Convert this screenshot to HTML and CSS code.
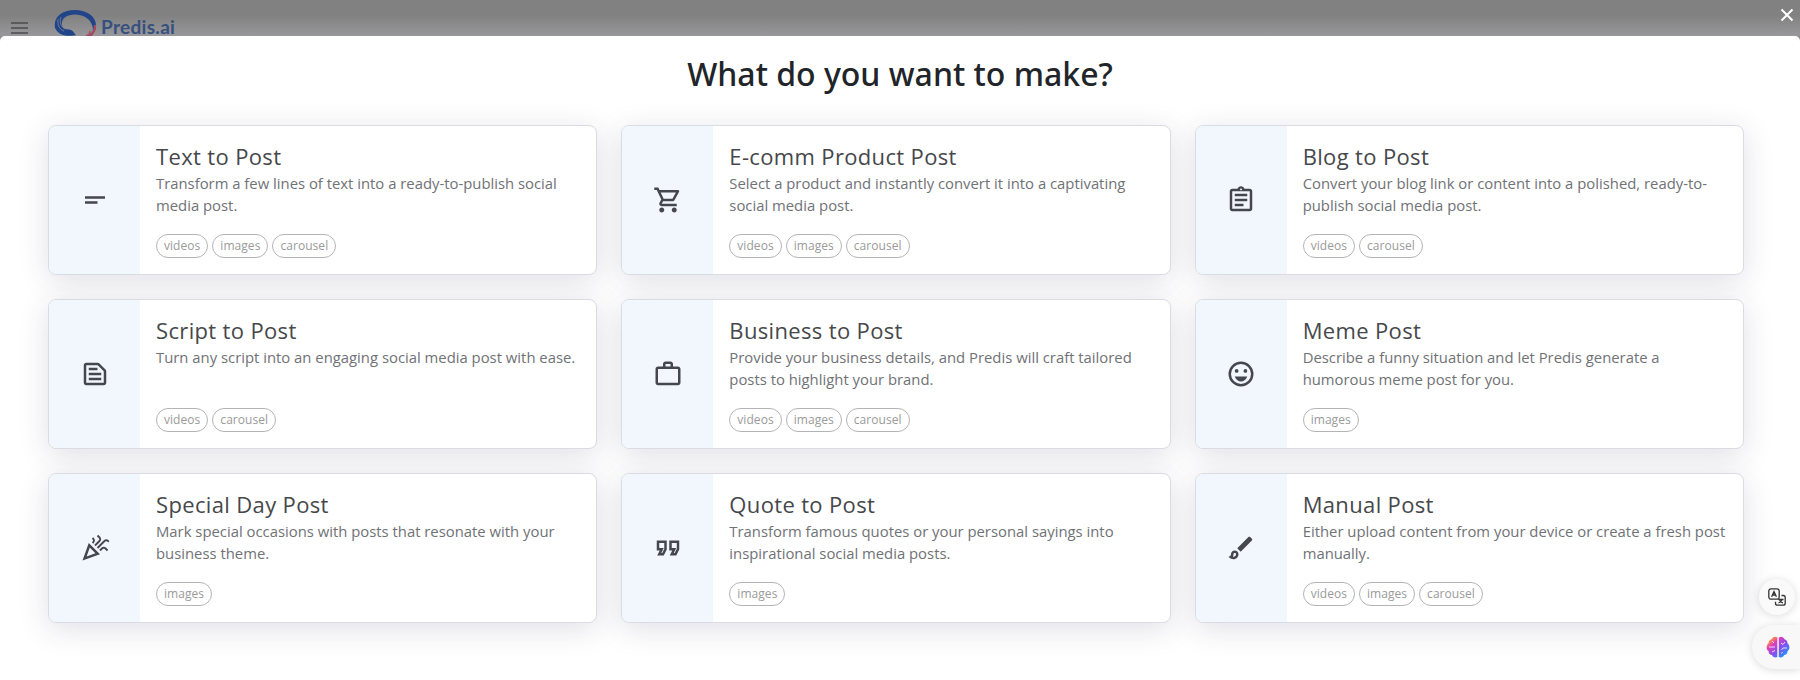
FILE: index.html
```html
<!DOCTYPE html>
<html lang="en">
<head>
    <meta charset="UTF-8">
    <meta name="viewport" content="width=device-width, initial-scale=1.0">
    <title>Predis.ai</title>
    <link rel="stylesheet" href="styles.css">
</head>
<body>
    <header class="topbar">
        <svg class="menu-icon" width="18" height="14" viewBox="0 0 18 14"><path d="M0 2h17M0 7h17M0 12h17"/></svg>
        <svg class="logo-mark" width="44" height="26" viewBox="0 0 44 26">
            <path class="logo-blue" d="M1 18C-1 7 8 0 21 0c12 0 22 7 21 17-.3 3-1.500 5-3 6.500C40 14 35 5 21 4.500 12 4.500 7 9 8 15c.6 4 4 4 7 4.500 4 .500 4.500 3 7 5.500-5 1.500-17 2-21-7z"/>
            <path class="logo-line" d="M4 9c-.5 6 1 10 6 12M7 7c-2 5 0 10 4 12"/>
            <path class="logo-red" d="M42 15c1 6-3 9-6 14H25c3-2 9-3 11-9l1 3c2-2 3-5 3-8z"/>
            <path class="logo-line" d="M38 19c0 4-5 5-8 9"/>
        </svg>
        <span class="logo-text">Predis.ai</span>
        <button class="close-btn" aria-label="Close">
            <svg width="14" height="14" viewBox="0 0 14 14"><path d="M1.500 1.500l11 11M12.500 1.500l-11 11"/></svg>
        </button>
    </header>

    <main class="modal">
        <h1>What do you want to make?</h1>
        <div class="grid">
            <div class="card">
                <div class="card-icon">
                    <svg viewBox="0 0 24 24"><path d="M4 9h16v2H4zM4 13h10v2H4z"/></svg>
                </div>
                <div class="card-body">
                    <h2>Text to Post</h2>
                    <p>Transform a few lines of text into a ready-to-publish social media post.</p>
                    <div class="tags"><span>videos</span><span>images</span><span>carousel</span></div>
                </div>
            </div>
            <div class="card">
                <div class="card-icon">
                    <svg viewBox="0 0 24 24"><path d="M15.550 13c.75 0 1.410-.41 1.750-1.030l3.580-6.490c.37-.66-.11-1.480-.87-1.480H5.210l-.94-2H1v2h2l3.600 7.590-1.350 2.440C4.520 15.370 5.480 17 7 17h12v-2H7l1.100-2h7.450zM6.160 6h12.150l-2.760 5H8.530L6.160 6zM7 18c-1.100 0-1.990.9-1.990 2S5.900 22 7 22s2-.9 2-2-.9-2-2-2zm10 0c-1.100 0-1.990.9-1.990 2s.89 2 1.990 2 2-.9 2-2-.9-2-2-2z"/></svg>
                </div>
                <div class="card-body">
                    <h2>E-comm Product Post</h2>
                    <p>Select a product and instantly convert it into a captivating social media post.</p>
                    <div class="tags"><span>videos</span><span>images</span><span>carousel</span></div>
                </div>
            </div>
            <div class="card">
                <div class="card-icon">
                    <svg viewBox="0 0 24 24"><path d="M7 15h7v2H7zm0-4h10v2H7zm0-4h10v2H7zm12-4h-4.180C14.400 1.840 13.300 1 12 1c-1.300 0-2.400.84-2.820 2H5c-1.100 0-2 .9-2 2v14c0 1.100.9 2 2 2h14c1.100 0 2-.9 2-2V5c0-1.100-.9-2-2-2zm-7-.25c.41 0 .75.34.75.75s-.34.75-.75.75-.75-.34-.75-.75.34-.75.75-.75zM19 19H5V5h14v14z"/></svg>
                </div>
                <div class="card-body">
                    <h2>Blog to Post</h2>
                    <p>Convert your blog link or content into a polished, ready-to-publish social media post.</p>
                    <div class="tags"><span>videos</span><span>carousel</span></div>
                </div>
            </div>
            <div class="card">
                <div class="card-icon">
                    <svg viewBox="0 0 24 24"><path d="M14.170 5L19 9.830V19H5V5h9.170m0-2H5c-1.100 0-2 .9-2 2v14c0 1.100.9 2 2 2h14c1.100 0 2-.9 2-2V9.830c0-.53-.21-1.040-.59-1.410l-4.830-4.830c-.37-.38-.88-.59-1.410-.59zM7 15h10v2H7v-2zm0-4h10v2H7v-2zm0-4h7v2H7V7z"/></svg>
                </div>
                <div class="card-body">
                    <h2>Script to Post</h2>
                    <p>Turn any script into an engaging social media post with ease.</p>
                    <div class="tags"><span>videos</span><span>carousel</span></div>
                </div>
            </div>
            <div class="card">
                <div class="card-icon">
                    <svg viewBox="0 0 24 24"><path d="M14 6V4h-4v2h4zM4 8v11h16V8H4zm16-2c1.110 0 2 .89 2 2v11c0 1.110-.89 2-2 2H4c-1.110 0-2-.89-2-2l.01-11c0-1.110.88-2 1.990-2h4V4c0-1.110.89-2 2-2h4c1.110 0 2 .89 2 2v2h4z"/></svg>
                </div>
                <div class="card-body">
                    <h2>Business to Post</h2>
                    <p>Provide your business details, and Predis will craft tailored posts to highlight your brand.</p>
                    <div class="tags"><span>videos</span><span>images</span><span>carousel</span></div>
                </div>
            </div>
            <div class="card">
                <div class="card-icon">
                    <svg viewBox="0 0 24 24"><path fill-rule="evenodd" d="M12 2a10 10 0 1 0 0 20 10 10 0 0 0 0-20zm0 2a8 8 0 1 1 0 16 8 8 0 0 1 0-16z"/><circle cx="8.500" cy="9.500" r="1.500"/><circle cx="15.500" cy="9.500" r="1.500"/><path d="M12 18c2.280 0 4.220-1.660 5-4H7c.78 2.340 2.720 4 5 4z"/></svg>
                </div>
                <div class="card-body">
                    <h2>Meme Post</h2>
                    <p>Describe a funny situation and let Predis generate a humorous meme post for you.</p>
                    <div class="tags"><span>images</span></div>
                </div>
            </div>
            <div class="card">
                <div class="card-icon">
                    <svg viewBox="0 0 24 24"><path fill-rule="evenodd" d="M2 22l14-5L7 8 2 22zm10.350-5.820L5.300 18.700l2.520-7.050 4.530 4.530z"/><path d="M14.530 12.530l5.590-5.590c.49-.49 1.280-.49 1.770 0l.59.59 1.060-1.060-.59-.59c-1.070-1.070-2.820-1.070-3.890 0l-5.590 5.590 1.060 1.060zM10.060 6.880l-.59.59 1.060 1.060.59-.59c1.070-1.070 1.070-2.820 0-3.890l-.59-.59-1.060 1.070.59.59c.48.48.48 1.280 0 1.760zM17.060 11.880l-1.590 1.590 1.060 1.060 1.590-1.590c.49-.49 1.280-.49 1.770 0l1.610 1.610 1.060-1.060-1.610-1.610c-1.080-1.070-2.820-1.070-3.900 0zM15.060 5.880l-3.590 3.590 1.060 1.060 3.590-3.590c1.070-1.070 1.070-2.820 0-3.890l-1.590-1.590-1.060 1.060 1.590 1.590c.48.49.48 1.290 0 1.770z"/></svg>
                </div>
                <div class="card-body">
                    <h2>Special Day Post</h2>
                    <p>Mark special occasions with posts that resonate with your business theme.</p>
                    <div class="tags"><span>images</span></div>
                </div>
            </div>
            <div class="card">
                <div class="card-icon">
                    <svg viewBox="0 0 24 24"><path fill-rule="evenodd" d="M18.620 18h-5.240l2-4H13V6h8v7.240L18.620 18zm-2-2h.76L19 12.760V8h-4v4h3.620l-2 4zm-8 2H3.380l2-4H3V6h8v7.240L8.620 18zm-2-2h.76L9 12.760V8H5v4h3.620l-2 4z"/></svg>
                </div>
                <div class="card-body">
                    <h2>Quote to Post</h2>
                    <p>Transform famous quotes or your personal sayings into inspirational social media posts.</p>
                    <div class="tags"><span>images</span></div>
                </div>
            </div>
            <div class="card">
                <div class="card-icon">
                    <svg viewBox="0 0 24 24"><path fill-rule="evenodd" d="M7 16c.55 0 1 .45 1 1 0 1.100-.9 2-2 2-.17 0-.33-.02-.5-.05.31-.55.5-1.210.5-1.950 0-.55.45-1 1-1zM18.670 3c-.26 0-.51.1-.71.29L9 12.250 11.750 15l8.960-8.960c.39-.39.39-1.020 0-1.410l-1.340-1.340c-.2-.2-.45-.29-.7-.29zM7 14c-1.660 0-3 1.340-3 3 0 1.310-1.160 2-2 2 .92 1.220 2.490 2 4 2 2.210 0 4-1.790 4-4 0-1.660-1.340-3-3-3z"/></svg>
                </div>
                <div class="card-body">
                    <h2>Manual Post</h2>
                    <p>Either upload content from your device or create a fresh post manually.</p>
                    <div class="tags"><span>videos</span><span>images</span><span>carousel</span></div>
                </div>
            </div>
        </div>
    </main>

    <div class="float-tools">
        <button class="translate-btn" aria-label="Translate">
            <svg width="18" height="18" viewBox="0 0 18 18">
                <rect x=".8" y=".8" width="10.400" height="10.400" rx="2.200"/>
                <path d="M3.600 8.700L6 3.500l2.400 5.200M4.500 7h3M13.500 7.500h1.700c1.200 0 2 .8 2 2v5.700c0 1.200-.8 2-2 2H9.500c-1.200 0-2-.8-2-2v-1.400M10.500 11.500h5M14 11.500c-.5 2-2 3-3.500 3.300M11.500 12.500c.8 1.300 2 2 3.500 2.300"/>
            </svg>
        </button>
        <button class="brain-btn" aria-label="Assistant">
            <svg width="24" height="24" viewBox="0 0 24 24">
                <defs>
                    <linearGradient id="brain" x1="0" y1="0" x2="1" y2="1">
                        <stop offset="0" stop-color="#ff9a3c"/>
                        <stop offset=".14" stop-color="#ff9a3c"/>
                        <stop offset=".32" stop-color="#e040b5"/>
                        <stop offset=".55" stop-color="#8a4df0"/>
                        <stop offset=".85" stop-color="#2b8cff"/>
                    </linearGradient>
                </defs>
                <path fill="url(#brain)" d="M11.300 2.500v19.500c-2.500 1-4.800-.1-5.300-2-2.200 0-3.700-1.700-3.300-3.800C.7 15 0 12.500 1 10.500c.2-1 .8-1.800 1.600-2.200C2.400 6 3.600 4.500 5.500 4.200 6.500 2 9 1 11.300 2.500zM12.800 2.500v19.500c2.500 1 4.800-.1 5.300-2 2.200 0 3.700-1.700 3.300-3.800 1.900-1.200 2.600-3.700 1.600-5.700-.2-1-.8-1.800-1.600-2.200.2-2.300-1-3.800-2.900-4.100-1-2.200-3.400-3.200-5.700-1.700z"/>
                <path class="brain-lines" d="M3 12h6M6 6l2 2M6 17l3-1.500M21 13h-4l-1.500 2M15 8l2 1.500L19 7M15.500 18.500l1-1.500"/>
            </svg>
        </button>
    </div>
</body>
</html>
```
FILE: styles.css
```css
* {
    box-sizing: border-box;
}
body {
    margin: 0;
    height: 680px;
    overflow: hidden;
    font-family: 'Open Sans', sans-serif;
    background-color: #8c8c8e;
}
button {
    border: none;
    padding: 0;
    cursor: pointer;
}
.topbar {
    display: flex;
    align-items: flex-start;
    height: 36px;
    padding: 0 6px 0 11px;
    background: linear-gradient(#808080 0, #828282 16px, #98989c 36px);
}
.menu-icon {
    margin-top: 21px;
    stroke: #4c4c4c;
    stroke-width: 1.5;
}
.logo-mark {
    margin: 10px 0 0 25px;
}
.logo-blue { fill: #22458a; }
.logo-red { fill: #a84a5f; }
.logo-line {
    fill: none;
    stroke: #858588;
    stroke-width: 0.8;
}
.logo-text {
    margin: 17px 0 0 3px;
    font-family: Lato, sans-serif;
    font-size: 19px;
    line-height: 19px;
    font-weight: 700;
    letter-spacing: 0.3px;
    color: #36507f;
}
.close-btn {
    margin: 8px 0 0 auto;
    width: 14px;
    height: 14px;
    background: none;
}
.close-btn svg {
    display: block;
    stroke: #fff;
    stroke-width: 2;
}
.modal {
    height: 644px;
    padding: 15px 56px 0 48px;
    background-color: #fff;
    border-radius: 5px 5px 0 0;
}
h1 {
    margin: 0 -8px 29px 0;
    font-family: 'Noto Sans', 'Open Sans', sans-serif;
    font-size: 32px;
    line-height: 45px;
    font-weight: 500;
    text-align: center;
    color: #212529;
}
.grid {
    display: grid;
    grid-template-columns: repeat(3, 1fr);
    grid-auto-rows: 150px;
    gap: 24px;
}
.card {
    display: flex;
    overflow: hidden;
    background-color: #fff;
    border: 1px solid #d9dce3;
    border-radius: 8px;
    box-shadow: 0 6px 30px rgba(50, 50, 93, 0.15);
}
.card-icon {
    display: flex;
    flex: 0 0 91px;
    align-items: center;
    justify-content: center;
    background-color: #f2f7fe;
}
.card-icon svg {
    width: 30px;
    height: 30px;
    fill: #44474f;
}
.card-body {
    display: flex;
    flex-direction: column;
    flex: 1;
    padding: 15px 15px 16px 16px;
}
h2 {
    margin: 0;
    font-size: 22px;
    line-height: 31px;
    font-weight: 400;
    letter-spacing: 0.35px;
    color: #46484b;
}
p {
    margin: 0;
    font-size: 14.85px;
    line-height: 22px;
    color: #707276;
}
.tags {
    display: flex;
    gap: 4px;
    margin-top: auto;
}
.tags span {
    padding: 0 7px;
    height: 24px;
    border: 1px solid #b4b4b4;
    border-radius: 12px;
    font-size: 12px;
    line-height: 21px;
    letter-spacing: 0.05px;
    color: #9a9a9a;
}
/* stays above the cards in the bottom corner */
.float-tools {
    position: absolute;
    right: 0;
    bottom: 11px;
    display: flex;
    flex-direction: column;
    align-items: flex-end;
    gap: 10px;
}
.translate-btn {
    display: flex;
    align-items: center;
    justify-content: center;
    width: 36px;
    height: 36px;
    margin-right: 5px;
    border-radius: 50%;
    background-color: #fafafa;
    box-shadow: 0 1px 8px rgba(0, 0, 0, 0.15);
}
.translate-btn svg {
    fill: none;
    stroke: #333;
    stroke-width: 1.3;
}
.brain-btn {
    display: flex;
    align-items: center;
    width: 48px;
    height: 44px;
    padding-left: 14px;
    border-radius: 22px 0 0 22px;
    background-color: #f8f8f8;
    box-shadow: 0 1px 8px rgba(0, 0, 0, 0.15);
}
.brain-lines {
    fill: none;
    stroke: #f3d9fa;
    stroke-width: 1;
}
```
